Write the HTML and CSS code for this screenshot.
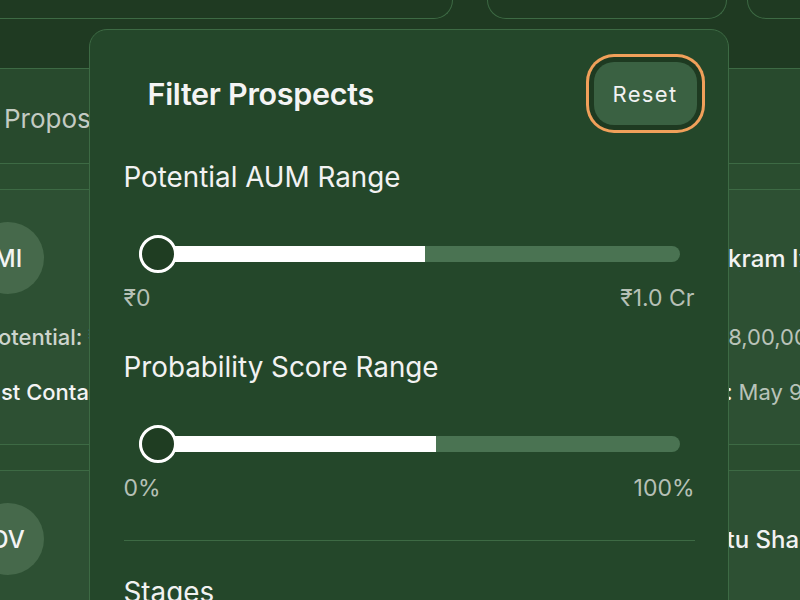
FILE: index.html
```html
<!DOCTYPE html>
<html lang="en">
<head>
<meta charset="utf-8">
<title>Filter Prospects</title>
<link rel="stylesheet" href="styles.css">
</head>
<body>
<div class="page">
  <div class="topbar">
    <div class="chips">
      <div class="chip chip-1"></div>
      <div class="chip chip-2"></div>
      <div class="chip chip-3"></div>
    </div>
  </div>
  <div class="tabbar"><span class="tab">Proposal Sent</span></div>
  <div class="spacer"></div>
  <div class="row">
    <div class="card card-left">
      <div class="card-head"><div class="avatar">MI</div><div class="name">Meera Iyer</div></div>
      <div class="line line-a"><span class="lbl">Potential:</span> <span class="val">₹12,00,000</span></div>
      <div class="line line-b"><span class="lbl strong">Last Contact:</span> <span class="val">May 12</span></div>
    </div>
    <div class="card card-right">
      <div class="card-head"><div class="avatar">VI</div><div class="name">Vikram Iyer</div></div>
      <div class="line line-c"><span class="lbl">Potential:</span> <span class="val">₹8,00,000</span></div>
      <div class="line line-d"><span class="lbl strong">Last Contact:</span> <span class="val">May 9</span></div>
    </div>
  </div>
  <div class="spacer"></div>
  <div class="row">
    <div class="card card-left">
      <div class="card-head"><div class="avatar">DV</div><div class="name">Deepak Verma</div></div>
    </div>
    <div class="card card-right">
      <div class="card-head"><div class="avatar">RS</div><div class="name">Ritu Sharma</div></div>
    </div>
  </div>
</div>

<div class="modal">
  <div class="modal-head">
    <h2 class="title">Filter Prospects</h2>
    <button class="reset">Reset</button>
  </div>

  <h3 class="section-title first">Potential AUM Range</h3>
  <div class="slider">
    <div class="track"><div class="fill" style="width:53%"></div></div>
    <div class="thumb"></div>
  </div>
  <div class="range-labels"><span>₹0</span><span>₹1.0 Cr</span></div>

  <h3 class="section-title">Probability Score Range</h3>
  <div class="slider">
    <div class="track"><div class="fill" style="width:55%"></div></div>
    <div class="thumb"></div>
  </div>
  <div class="range-labels"><span>0%</span><span>100%</span></div>

  <div class="divider"></div>

  <h3 class="section-title stages">Stages</h3>
</div>
</body>
</html>
```

FILE: styles.css
```css
html, body {
  margin: 0;
  padding: 0;
}

body {
  width: 800px;
  height: 600px;
  overflow: hidden;
  position: relative;
  background: #2a4d2f;
  font-family: Inter, "Noto Sans", sans-serif;
  color: #f2f2f2;
}

.page {
  width: 800px;
}

.topbar {
  height: 68px;
  background: #1f3a22;
  border-bottom: 1.5px solid #3d6a44;
}

.chips {
  display: flex;
}

.chip {
  box-sizing: border-box;
  height: 19px;
  border: 1.5px solid #3d6a44;
  border-top: none;
  border-radius: 0 0 22px 22px;
  flex: none;
}

.chip-1 { margin-left: -30px; width: 483px; }
.chip-2 { margin-left: 34px; width: 240px; }
.chip-3 { margin-left: 20px; width: 120px; }

.tabbar {
  box-sizing: border-box;
  height: 95px;
  background: #284a2d;
  border-bottom: 1.5px solid #3d6a44;
  display: flex;
  align-items: center;
  padding: 4px 0 0 4px;
}

.tab {
  font-size: 26px;
  color: #c3cbc3;
  white-space: nowrap;
}

.spacer {
  height: 24.5px;
  background: #2a4d2f;
  border-bottom: 1.5px solid #3d6a44;
}

.row {
  display: flex;
  height: 254.5px;
  background: #2d5033;
  border-bottom: 1.5px solid #3d6a44;
  overflow: hidden;
}

.card {
  box-sizing: border-box;
  padding-top: 32.5px;
  flex: none;
}

.card-left {
  width: 633px;
  margin-left: -28px;
}

.card-right {
  width: 300px;
  padding-left: 12px;
}

.card-head {
  display: flex;
  align-items: center;
  gap: 16px;
}

.card-left .name {
  margin-left: 40px;
}

.avatar {
  width: 72px;
  height: 72px;
  border-radius: 50%;
  background: #46694b;
  display: flex;
  align-items: center;
  justify-content: center;
  font-size: 24px;
  font-weight: 500;
  color: #f4f4f4;
  flex: none;
}

.name {
  font-size: 24px;
  font-weight: 500;
  white-space: nowrap;
}

.line {
  font-size: 22px;
  line-height: 28px;
  white-space: nowrap;
  font-weight: 500;
}

.line-a, .line-c { margin-top: 29px; }
.line-b, .line-d { margin-top: 27px; }

.line-a { margin-left: 12px; }
.line-b { margin-left: 4px; }
.line-c { margin-left: -5px; }
.line-d { margin-left: -24px; }

.lbl { color: #cdd4cd; }
.lbl.strong { color: #f4f4f4; }
.val { color: #b9c3b9; font-weight: 400; }

.modal {
  position: absolute;
  left: 89px;
  top: 29px;
  width: 640px;
  height: 620px;
  box-sizing: border-box;
  background: #24472a;
  border: 1.5px solid #3d6a44;
  border-radius: 18px;
  padding: 32px 33.5px 0;
}

.modal-head {
  display: flex;
  justify-content: space-between;
  align-items: center;
  height: 63px;
}

.title {
  margin: 0 0 0 24px;
  font-size: 30.5px;
  font-weight: 600;
  letter-spacing: -0.3px;
  color: #f4f4f4;
}

.reset {
  width: 103px;
  height: 63px;
  margin-right: -2px;
  border: none;
  border-radius: 20px;
  background: #3a6142;
  color: #f2f2f2;
  font-family: inherit;
  font-size: 22px;
  font-weight: 400;
  letter-spacing: 1.3px;
  box-shadow: 0 0 0 5px #1e3a21, 0 0 0 8px #f0a05a;
  padding: 0;
}

.section-title {
  margin: 39.5px 0 0;
  font-size: 27.8px;
  line-height: 32px;
  font-weight: 400;
  color: #f2f2f2;
}

.section-title.first {
  margin-top: 36px;
}

.section-title.stages {
  margin-top: 35px;
}

.slider {
  position: relative;
  height: 38px;
  margin: 41.5px 15px 0;
}

.track {
  position: relative;
  top: 11px;
  height: 16px;
  border-radius: 8px;
  background: #4a7352;
  overflow: hidden;
}

.fill {
  height: 100%;
  background: #ffffff;
}

.thumb {
  position: absolute;
  left: 0;
  top: 0;
  width: 38px;
  height: 38px;
  box-sizing: border-box;
  border-radius: 50%;
  border: 3px solid #ffffff;
  background: #1f3d22;
}

.range-labels {
  display: flex;
  justify-content: space-between;
  margin-top: 11px;
  font-size: 23px;
  line-height: 28px;
  color: #b6c0b6;
}

.divider {
  margin-top: 38px;
  height: 1.5px;
  background: #3d6a44;
}
```
